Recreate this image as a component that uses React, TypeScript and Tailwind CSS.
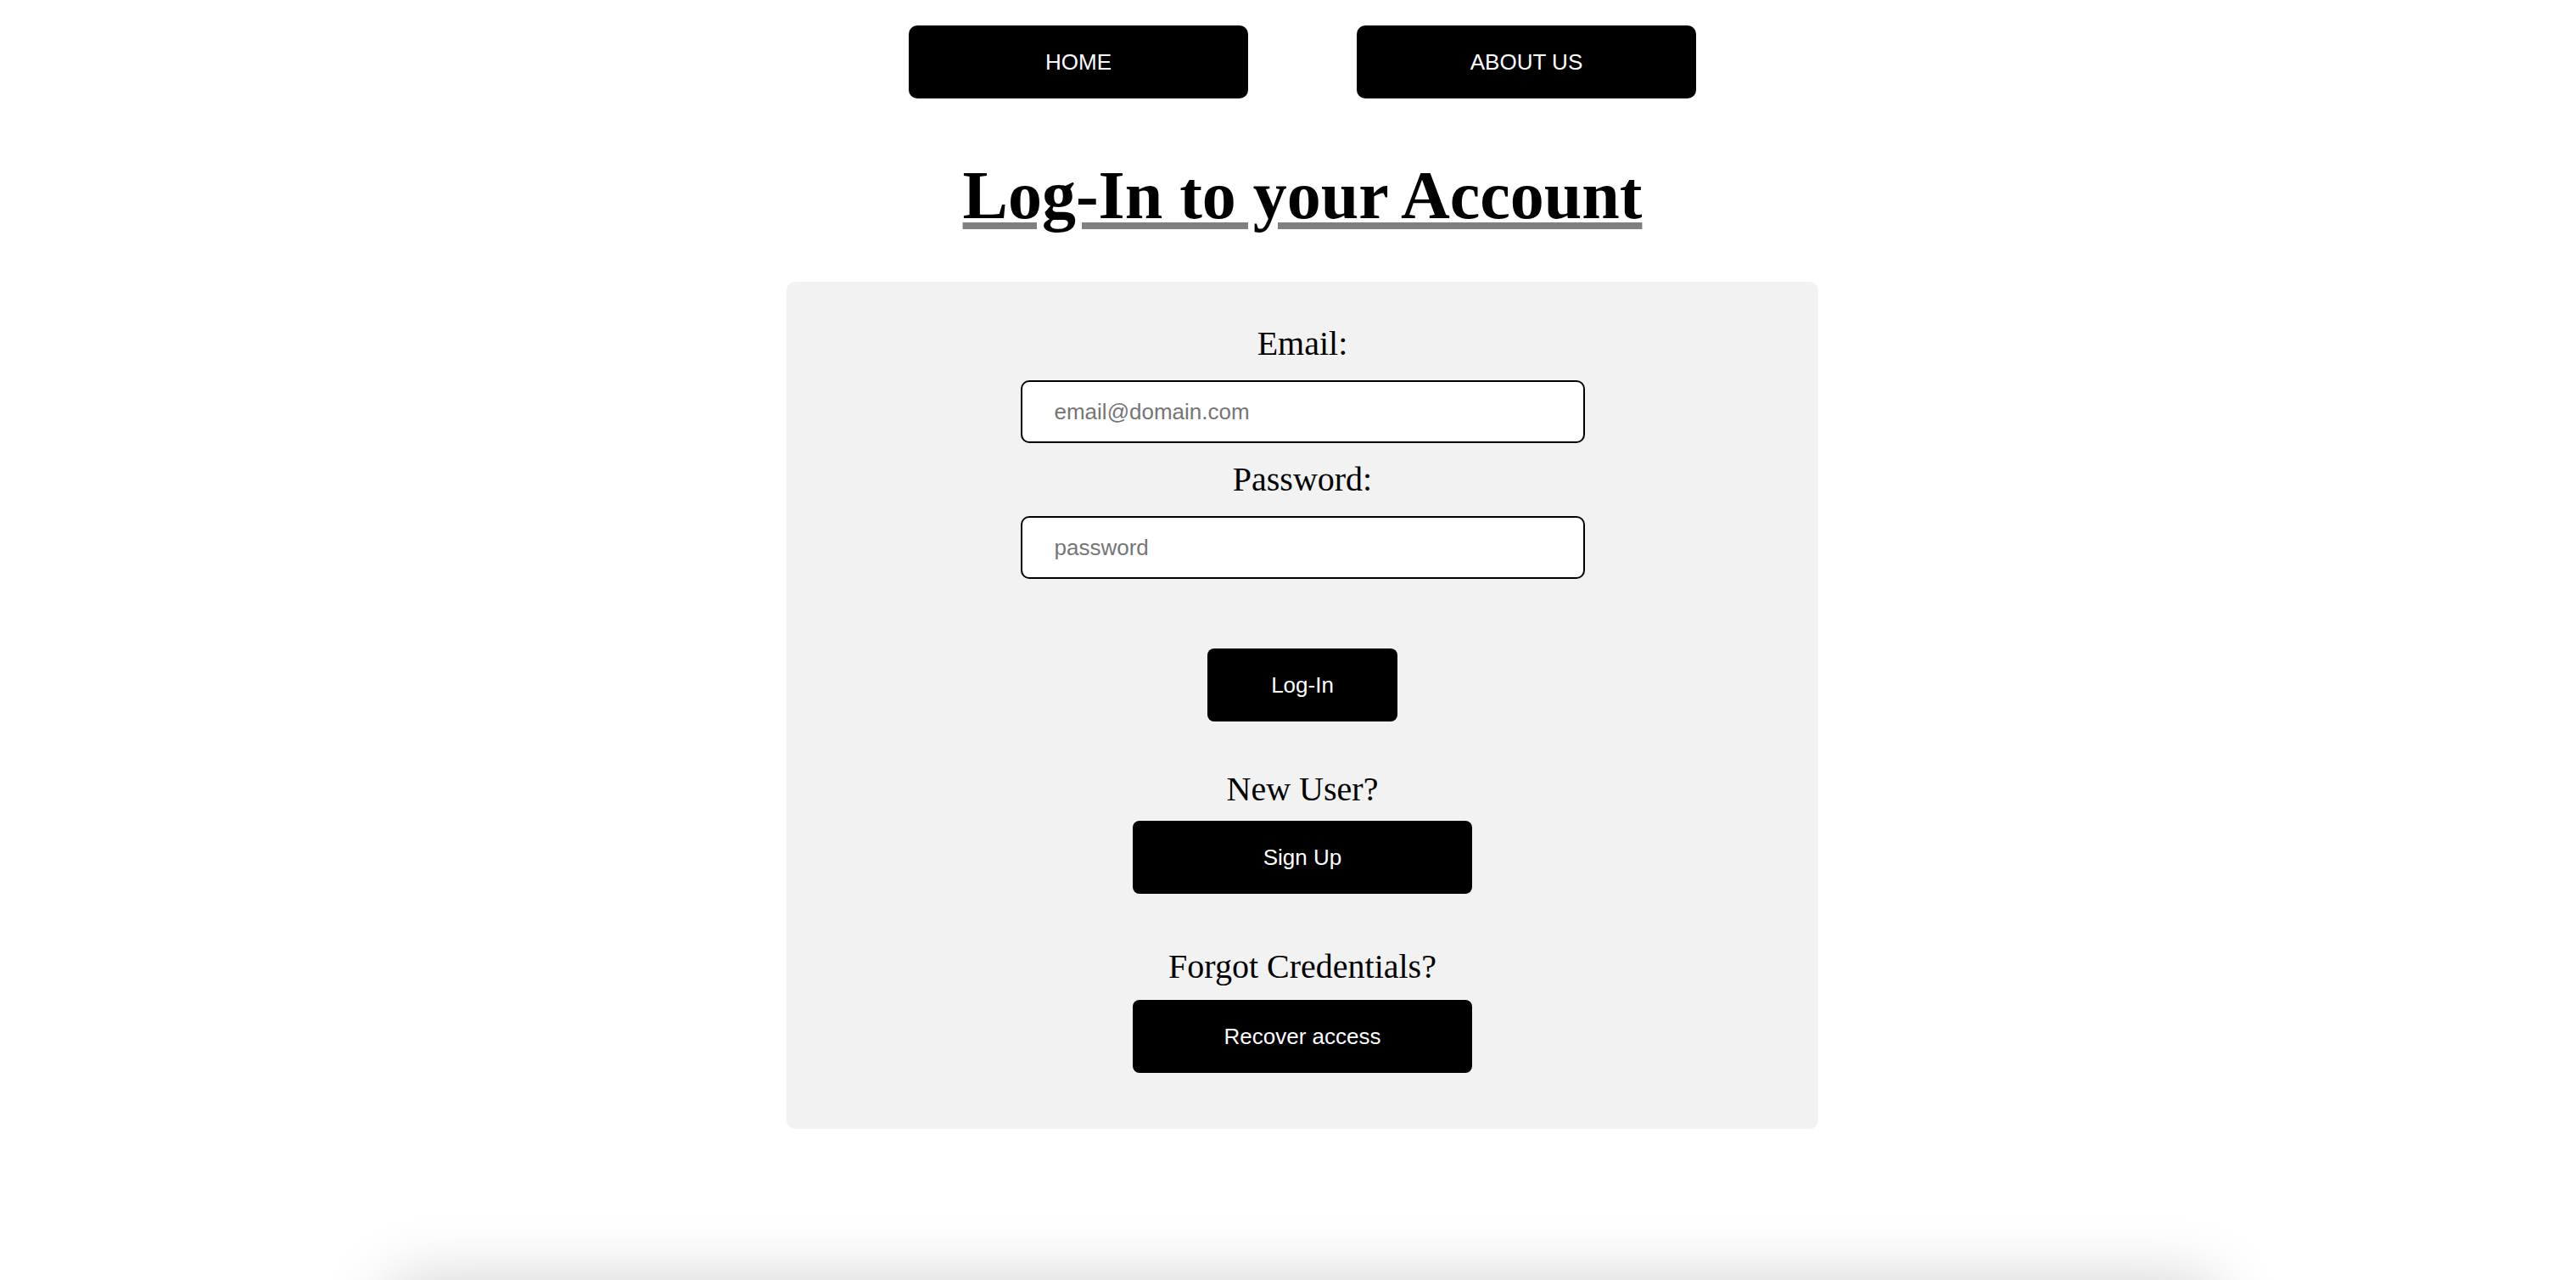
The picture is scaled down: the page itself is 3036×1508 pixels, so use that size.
import { useState } from 'react'

const serif = "font-['Liberation_Serif','Times_New_Roman',serif]"
const sans = "font-['Liberation_Sans',Arial,sans-serif]"

function NavButton({ label }: { label: string }) {
  return (
    <button className={`w-[400px] h-[86px] rounded-[10px] bg-black text-white text-[26px] ${sans}`}>
      {label}
    </button>
  )
}

function Field({ label, type, placeholder, value, onChange }: {
  label: string
  type: string
  placeholder: string
  value: string
  onChange: (v: string) => void
}) {
  return (
    <div className="flex flex-col items-center">
      <label className={`text-[40px] leading-[46px] text-black ${serif}`}>{label}</label>
      <input
        type={type}
        value={value}
        onChange={e => onChange(e.target.value)}
        placeholder={placeholder}
        className={`mt-[20px] w-[665px] h-[74px] rounded-[10px] border-2 border-black bg-white pl-[38px] text-[26px] outline-none placeholder:text-[#757575] ${sans}`}
      />
    </div>
  )
}

export default function App() {
  const [email, setEmail] = useState('')
  const [password, setPassword] = useState('')

  return (
    <div className="min-h-screen bg-white pl-[34px] pt-[30px] flex flex-col items-center">
      {/* top nav */}
      <nav className="flex gap-[128px]">
        <NavButton label="HOME" />
        <NavButton label="ABOUT US" />
      </nav>

      <h1 className={`mt-[74px] h-[80px] text-[80px] leading-[80px] font-bold text-black underline decoration-[#808080] decoration-[8px] underline-offset-[5px] ${serif}`}>
        Log-In to your Account
      </h1>

      {/* login card */}
      <form
        onSubmit={e => e.preventDefault()}
        className="mt-[62px] w-[1216px] h-[998px] rounded-[10px] bg-[#f2f2f2] pt-[50px] flex flex-col items-center"
      >
        <Field label="Email:" type="email" placeholder="email@domain.com" value={email} onChange={setEmail} />
        <div className="mt-[20px]">
          <Field label="Password:" type="password" placeholder="password" value={password} onChange={setPassword} />
        </div>

        <button type="submit" className={`mt-[82px] w-[224px] h-[86px] rounded-[8px] bg-black text-white text-[26px] ${sans}`}>
          Log-In
        </button>

        <p className={`mt-[57px] text-[40px] leading-[46px] text-black ${serif}`}>New User?</p>
        <button type="button" className={`mt-[14px] w-[400px] h-[86px] rounded-[8px] bg-black text-white text-[26px] ${sans}`}>
          Sign Up
        </button>

        <p className={`mt-[63px] text-[40px] leading-[46px] text-black ${serif}`}>Forgot Credentials?</p>
        <button type="button" className={`mt-[16px] w-[400px] h-[86px] rounded-[8px] bg-black text-white text-[26px] ${sans}`}>
          Recover access
        </button>
      </form>

      {/* footer, mostly below the fold */}
      <footer className="mt-[182px] w-[2150px] h-[200px] bg-white shadow-[0_0_80px_rgba(0,0,0,0.2)]" />
    </div>
  )
}
